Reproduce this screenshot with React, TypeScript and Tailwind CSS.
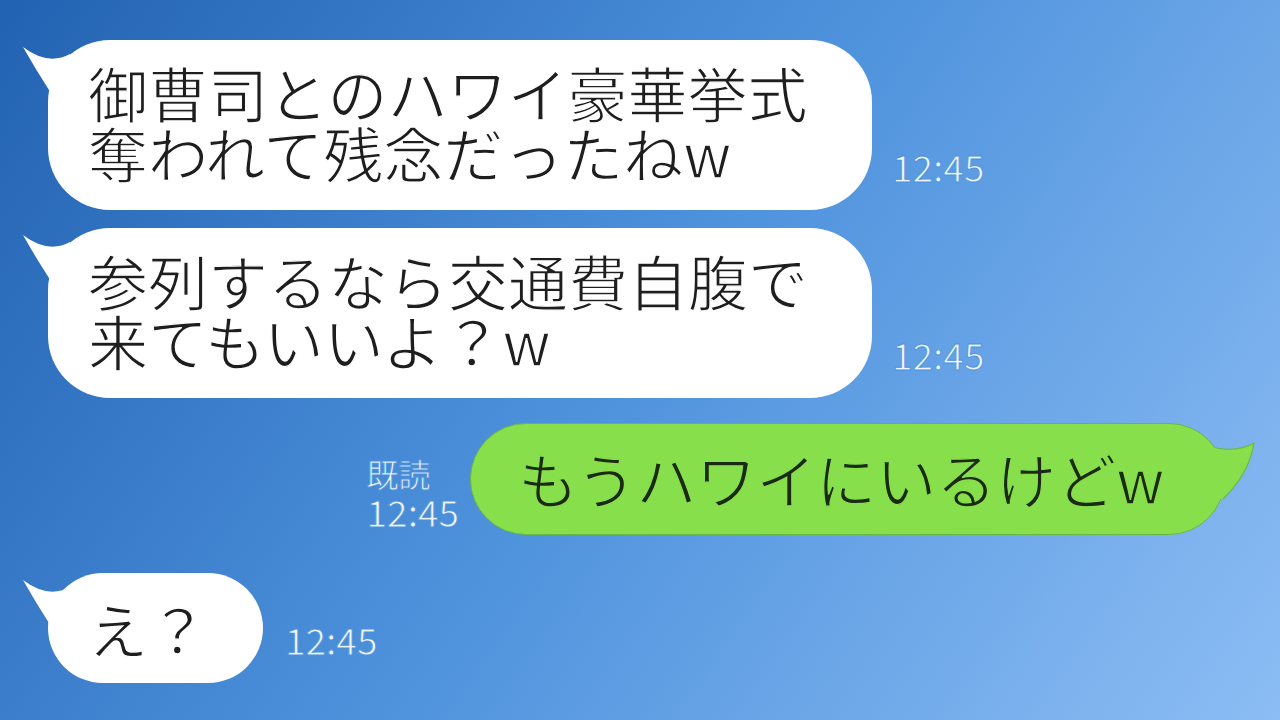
import React from "react";

const font = "font-['Noto_Sans_CJK_JP','Noto_Sans',sans-serif]";

function WhiteTail() {
  return (
    <svg
      className="absolute left-[-30px] top-0"
      width="70"
      height="60"
      viewBox="-30 0 70 60"
    >
      <path d="M -25 7 Q 0 26 22 14 L 22 50 L 1 50 Q -12 30 -25 7 Z" fill="#ffffff" />
    </svg>
  );
}

function GreenTail() {
  return (
    <svg
      className="absolute left-0 top-0 overflow-visible"
      width="1"
      height="1"
      viewBox="0 0 1 1"
    >
      <path d="M 745 24 Q 768 28 783 19 Q 778 50 752 75 L 730 75 L 730 24 Z" fill="#87df4c" />
      <path d="M 745 24 Q 768 28 783 19 Q 778 50 752 75" fill="none" stroke="#6ab844" strokeWidth="1.2" />
    </svg>
  );
}

function Time({ className = "" }: { className?: string }) {
  return (
    <div className={`text-[37px] leading-none text-[#eef5fd] [-webkit-text-stroke:0.9px_#4d92dc] ${className}`}>
      12:45
    </div>
  );
}

const whiteText =
  "text-[60px] leading-[60px] text-[#1e1e1e] whitespace-nowrap [-webkit-text-stroke:1.3px_#ffffff]";

export default function App() {
  return (
    <div
      className={`${font} w-[1280px] h-[720px] overflow-hidden bg-linear-125 from-[#2262b2] via-[#4f93dd] to-[#8cbdf4] flex flex-col pl-[48px] pt-[40px]`}
    >
      {/* Message 1 */}
      <div className="flex items-end">
        <div className={`relative w-[824px] h-[170px] bg-white rounded-[62px] pl-[40px] pt-[22px] ${whiteText}`}>
          <WhiteTail />
          <div className="relative">
            御曹司とのハワイ豪華挙式
            <br />
            奪われて残念だったねw
          </div>
        </div>
        <Time className="ml-[20px] mb-[25px]" />
      </div>

      {/* Message 2 */}
      <div className="flex items-end mt-[18px]">
        <div className={`relative w-[824px] h-[170px] bg-white rounded-[62px] pl-[40px] pt-[22px] ${whiteText}`}>
          <WhiteTail />
          <div className="relative">
            参列するなら交通費自腹で
            <br />
            来てもいいよ？w
          </div>
        </div>
        <Time className="ml-[20px] mb-[25px]" />
      </div>

      {/* Message 3 (mine) */}
      <div className="flex items-end justify-end mt-[25px] pr-[55px]">
        <div className="flex flex-col gap-[4px] mr-[11px] mb-[5px] text-[#eef5fd]">
          <div className="text-[32px] leading-none [-webkit-text-stroke:0.9px_#4d92dc]">既読</div>
          <Time />
        </div>
        <div className="relative w-[755px] h-[112px] bg-[#87df4c] border border-[#6ab844] rounded-full pl-[47px] pt-[24px] text-[60px] leading-[60px] text-[#1b2a12] whitespace-nowrap [-webkit-text-stroke:1.3px_#87df4c]">
          <GreenTail />
          <div className="relative">もうハワイにいるけどw</div>
        </div>
      </div>

      {/* Message 4 */}
      <div className="flex items-end mt-[38px]">
        <div className={`relative w-[215px] h-[110px] bg-white rounded-[55px] pl-[40px] pt-[25px] ${whiteText}`}>
          <WhiteTail />
          <div className="relative">え？</div>
        </div>
        <Time className="ml-[22px] mb-[25px]" />
      </div>
    </div>
  );
}
